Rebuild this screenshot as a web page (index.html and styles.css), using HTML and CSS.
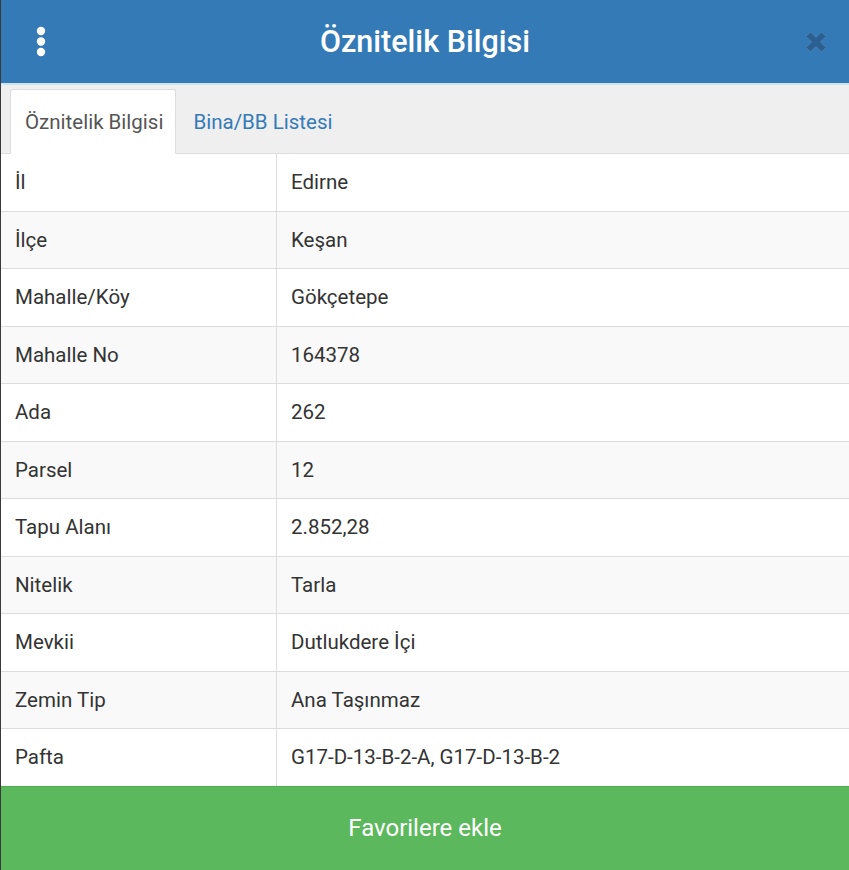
FILE: index.html
```html
<!DOCTYPE html>
<html lang="tr">
<head>
<meta charset="utf-8">
<title>Öznitelik Bilgisi</title>
<link rel="stylesheet" href="styles.css">
</head>
<body>
<div class="modal">
  <header class="modal-header">
    <button class="menu-btn" aria-label="Menü">
      <svg width="12" height="32" viewBox="0 0 12 32"><circle cx="6" cy="5" r="4.2" fill="#fff"/><circle cx="6" cy="15.5" r="4.2" fill="#fff"/><circle cx="6" cy="26" r="4.2" fill="#fff"/></svg>
    </button>
    <h1 class="title">Öznitelik Bilgisi</h1>
    <button class="close-btn" aria-label="Kapat">
      <svg width="26" height="26" viewBox="0 0 26 26"><path d="M3 7.5 L7.5 3 L13 8.5 L18.5 3 L23 7.5 L17.5 13 L23 18.5 L18.5 23 L13 17.5 L7.5 23 L3 18.5 L8.5 13 Z" fill="#2b5f92" stroke="#4a80b4" stroke-width="1" stroke-linejoin="round"/></svg>
    </button>
  </header>
  <nav class="tabs">
    <a class="tab active">Öznitelik Bilgisi</a>
    <a class="tab">Bina/BB Listesi</a>
  </nav>
  <table class="attr-table">
    <tbody>
      <tr><td>İl</td><td>Edirne</td></tr>
      <tr><td>İlçe</td><td>Keşan</td></tr>
      <tr><td>Mahalle/Köy</td><td>Gökçetepe</td></tr>
      <tr><td>Mahalle No</td><td>164378</td></tr>
      <tr><td>Ada</td><td>262</td></tr>
      <tr><td>Parsel</td><td>12</td></tr>
      <tr><td>Tapu Alanı</td><td>2.852,28</td></tr>
      <tr><td>Nitelik</td><td>Tarla</td></tr>
      <tr><td>Mevkii</td><td>Dutlukdere İçi</td></tr>
      <tr><td>Zemin Tip</td><td>Ana Taşınmaz</td></tr>
      <tr><td>Pafta</td><td>G17-D-13-B-2-A, G17-D-13-B-2</td></tr>
    </tbody>
  </table>
  <button class="fav-btn">Favorilere ekle</button>
</div>
</body>
</html>
```
FILE: styles.css
```css
html, body {
  margin: 0;
  padding: 0;
  background: #3a3a3a;
}
body {
  font-family: Roboto, "Liberation Sans", sans-serif;
  color: #333;
}
.modal {
  margin-left: 1px;
  width: 848px;
  height: 870px;
  background: #fff;
  display: flex;
  flex-direction: column;
  overflow: hidden;
}
.modal-header {
  height: 83px;
  background: #337ab7;
  border-bottom: 2px solid #cbe6f2;
  display: flex;
  align-items: center;
  justify-content: space-between;
  padding: 0 20px 0 34px;
}
.menu-btn, .close-btn {
  background: none;
  border: 0;
  padding: 0;
  display: flex;
  cursor: pointer;
}
.close-btn { margin-top: 1px; }
.title {
  margin: 0;
  color: #fff;
  font-size: 30.5px;
  font-weight: 500;
}
.tabs {
  height: 68px;
  background: #efefef;
  display: flex;
  align-items: flex-end;
  padding-left: 9px;
  border-bottom: 1px solid #ddd;
}
.tab {
  height: 64px;
  box-sizing: border-box;
  display: flex;
  align-items: center;
  padding: 0 14px;
  font-size: 20.5px;
  color: #337ab7;
  margin-bottom: -1px;
}
.tab.active {
  background: #fff;
  color: #555;
  border: 1px solid #ddd;
  border-bottom-color: #fff;
  border-radius: 3px 3px 0 0;
  height: 65px;
  padding: 0 12px 0 14px;
}
.tab:not(.active) { padding-left: 17px; }
.attr-table {
  width: 100%;
  border-collapse: collapse;
  font-size: 20.5px;
  color: #333;
}
.attr-table td {
  height: 56.5px;
  padding: 0 14px;
  border-top: 1px solid #ddd;
  vertical-align: middle;
}
.attr-table tr:first-child td { border-top: 0; }
.attr-table td:first-child {
  width: 247px;
  border-right: 1px solid #ddd;
}
.attr-table tr:nth-child(even) td { background: #f9f9f9; }
.fav-btn {
  flex: 1;
  border: 0;
  border-top: 1px solid #4cae4c;
  background: #5cb85c;
  color: #fff;
  font-family: Roboto, "Liberation Sans", sans-serif;
  font-size: 24px;
  padding: 0;
}
```
